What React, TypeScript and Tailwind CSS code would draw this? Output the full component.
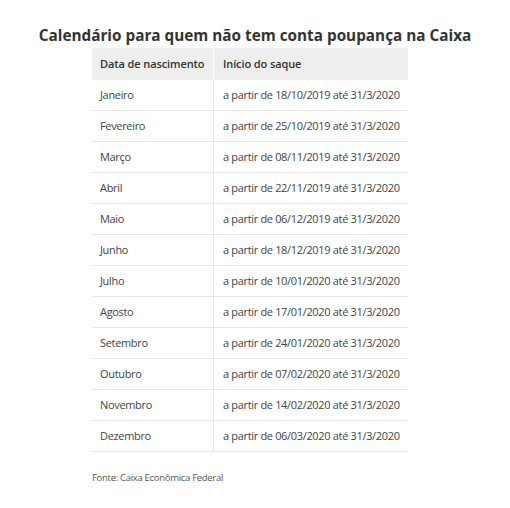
const rows = [
  ["Janeiro", "a partir de 18/10/2019 até 31/3/2020"],
  ["Fevereiro", "a partir de 25/10/2019 até 31/3/2020"],
  ["Março", "a partir de 08/11/2019 até 31/3/2020"],
  ["Abril", "a partir de 22/11/2019 até 31/3/2020"],
  ["Maio", "a partir de 06/12/2019 até 31/3/2020"],
  ["Junho", "a partir de 18/12/2019 até 31/3/2020"],
  ["Julho", "a partir de 10/01/2020 até 31/3/2020"],
  ["Agosto", "a partir de 17/01/2020 até 31/3/2020"],
  ["Setembro", "a partir de 24/01/2020 até 31/3/2020"],
  ["Outubro", "a partir de 07/02/2020 até 31/3/2020"],
  ["Novembro", "a partir de 14/02/2020 até 31/3/2020"],
  ["Dezembro", "a partir de 06/03/2020 até 31/3/2020"],
];

export default function App() {
  return (
    <div className="w-[510px] h-[508px] bg-white font-['Open_Sans',sans-serif] text-[#333]">
      <h1 className="pt-[23px] text-center text-[15.3px] leading-[24px] font-bold text-[#333] whitespace-nowrap">
        Calendário para quem não tem conta poupança na Caixa
      </h1>

      <div className="ml-[92px] mt-[1px] w-[316px]">
        {/* Header */}
        <div className="flex h-[32px] bg-[#eeeeee] text-[11px] font-semibold text-[#333] whitespace-nowrap tracking-[-0.1px]">
          <div className="w-[122px] flex items-center pl-[8px] border-r border-white">
            Data de nascimento
          </div>
          <div className="flex-1 flex items-center pl-[9px]">Início do saque</div>
        </div>

        {/* Rows */}
        {rows.map(([mes, data]) => (
          <div
            key={mes}
            className="flex h-[31px] border-b border-[#e6e6e6] text-[11px] text-[#444] whitespace-nowrap tracking-[-0.33px]"
          >
            <div className="w-[122px] flex items-center pl-[8px] border-r border-[#e6e6e6]">
              {mes}
            </div>
            <div className="flex-1 flex items-center pl-[9px]">{data}</div>
          </div>
        ))}

        <p className="mt-[19px] text-[9.5px] text-[#555] tracking-[-0.3px]">
          Fonte: Caixa Econômica Federal
        </p>
      </div>
    </div>
  );
}
